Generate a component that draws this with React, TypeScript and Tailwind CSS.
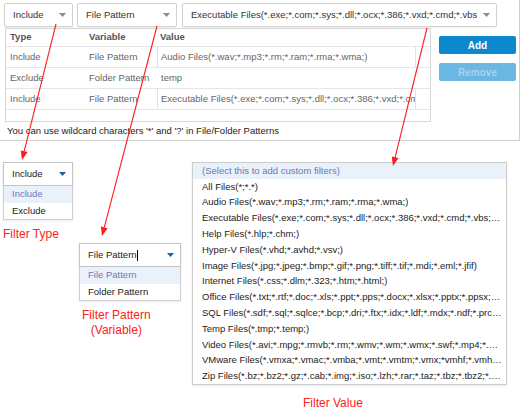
import type { ReactNode } from 'react';

const FONT = { fontFamily: '"Liberation Sans", Arial, sans-serif' };

const valueOptions = [
  'All Files(*;*.*)',
  'Audio Files(*.wav;*.mp3;*.rm;*.ram;*.rma;*.wma;)',
  'Executable Files(*.exe;*.com;*.sys;*.dll;*.ocx;*.386;*.vxd;*.cmd;*.vbs;*.bat;*.scr;)',
  'Help Files(*.hlp;*.chm;)',
  'Hyper-V Files(*.vhd;*.avhd;*.vsv;)',
  'Image Files(*.jpg;*.jpeg;*.bmp;*.gif;*.png;*.tiff;*.tif;*.mdi;*.eml;*.jfif)',
  'Internet Files(*.css;*.dlm;*.323;*.htm;*.html;)',
  'Office Files(*.txt;*.rtf;*.doc;*.xls;*.ppt;*.pps;*.docx;*.xlsx;*.pptx;*.ppsx;*.pdf;)',
  'SQL Files(*.sdf;*.sql;*.sqlce;*.bcp;*.dri;*.ftx;*.idx;*.ldf;*.mdx;*.ndf;*.prc;*.trg;)',
  'Temp Files(*.tmp;*.temp;)',
  'Video Files(*.avi;*.mpg;*.rmvb;*.rm;*.wmv;*.wm;*.wmx;*.swf;*.mp4;*.asf;)',
  'VMware Files(*.vmxa;*.vmac;*.vmba;*.vmt;*.vmtm;*.vmx;*vmhf;*.vmhr;*.vmdk;)',
  'Zip Files(*.bz;*.bz2;*.gz;*.cab;*.img;*.iso;*.lzh;*.rar;*.taz;*.tbz;*.tbz2;*.tgz;)',
];

const rows = [
  { type: 'Include', variable: 'File Pattern', value: 'Audio Files(*.wav;*.mp3;*.rm;*.ram;*.rma;*.wma;)', boxed: true },
  { type: 'Exclude', variable: 'Folder Pattern', value: 'temp', boxed: false },
  {
    type: 'Include',
    variable: 'File Pattern',
    value: 'Executable Files(*.exe;*.com;*.sys;*.dll;*.ocx;*.386;*.vxd;*.cmd;*.vbs;',
    boxed: true,
  },
];

function Caret({ blue }: { blue?: boolean }) {
  return (
    <svg width="7" height="4" viewBox="0 0 7 4" className="shrink-0">
      <polygon points="0,0 7,0 3.5,4" fill={blue ? '#1d5fa6' : '#8a8a8a'} />
    </svg>
  );
}

// top toolbar select
function Select({ width, children }: { width: string; children: ReactNode }) {
  return (
    <div
      className={`${width} h-[24px] flex items-center gap-[6px] pl-[8px] pr-[6px] border border-[#d2d2d2] rounded-[2px] bg-white shadow-[0_1px_1px_rgba(0,0,0,0.06)]`}
    >
      <div className="flex-1 overflow-hidden whitespace-nowrap text-[9.5px] text-[#333]">{children}</div>
      <Caret />
    </div>
  );
}

// opened dropdown in the lower callouts
function OpenSelect({ width, label, items, cursor }: { width: string; label: string; items: string[]; cursor?: boolean }) {
  return (
    <div className={width}>
      <div className="h-[24px] flex items-center pl-[8px] pr-[6px] border border-[#c6c6c6] bg-white shadow-[0_1px_2px_rgba(0,0,0,0.12)]">
        <div className="flex-1 flex items-center text-[9.5px] text-[#222]">
          {label}
          {cursor && <span className="w-px h-[11px] bg-black" />}
        </div>
        <Caret blue />
      </div>
      <div className="border border-t-0 border-[#cfcfcf] bg-white shadow-[0_1px_2px_rgba(0,0,0,0.08)]">
        {items.map((it, i) => (
          <div
            key={it}
            className={`h-[16.5px] flex items-center pl-[8px] text-[9.5px] ${
              i === 0 ? 'bg-[#e9f1fb] text-[#7278b8]' : 'text-[#222]'
            }`}
          >
            {it}
          </div>
        ))}
      </div>
    </div>
  );
}

function Arrow({ x1, y1, x2, y2 }: { x1: number; y1: number; x2: number; y2: number }) {
  const dx = x2 - x1;
  const dy = y2 - y1;
  const len = Math.hypot(dx, dy);
  const ux = dx / len;
  const uy = dy / len;
  const bx = x2 - ux * 9;
  const by = y2 - uy * 9;
  const px = -uy * 3.5;
  const py = ux * 3.5;
  return (
    <g>
      <line x1={x1} y1={y1} x2={bx} y2={by} stroke="#ff1a1a" strokeWidth="1.1" />
      <polygon points={`${x2},${y2} ${bx + px},${by + py} ${bx - px},${by - py}`} fill="#ff1a1a" />
    </g>
  );
}

export default function App() {
  return (
    <div className="relative w-[523px] h-[409px] bg-white overflow-hidden" style={FONT}>
      {/* ── filter editor panel ── */}
      <div className="w-[520px] h-[141px] border-r border-b border-[#cfcfcf]">
        <div className="flex pt-[3px] pl-[4px]">
          <Select width="w-[69px]">Include</Select>
          <div className="ml-[4px]">
            <Select width="w-[100px]">File Pattern</Select>
          </div>
          <div className="ml-[5px]">
            <Select width="w-[315px]">
              Executable Files(*.exe;*.com;*.sys;*.dll;*.ocx;*.386;*.vxd;*.cmd;*.vbs;*.bat;*.scr;)
            </Select>
          </div>
        </div>

        <div className="flex items-start pl-[5px] pt-[1px]">
          <div className="w-[426px] h-[94px] border border-[#d6d6d6]">
            <div className="grid grid-cols-[78px_73px_259px_1fr] h-[18px] items-center border-b border-[#e6e6e6] text-[9.5px] font-bold text-[#555]">
              <div className="pl-[4px]">Type</div>
              <div className="pl-[5px]">Variable</div>
              <div className="pl-[3px]">Value</div>
              <div />
            </div>
            {rows.map((r, i) => (
              <div
                key={i}
                className="grid grid-cols-[78px_73px_259px_1fr] h-[21px] border-b border-[#e6e6e6] text-[9.5px] text-[#666]"
              >
                <div className="pl-[4px] flex items-center">{r.type}</div>
                <div className="pl-[5px] flex items-center">{r.variable}</div>
                <div
                  className={`pl-[3px] flex items-center overflow-hidden whitespace-nowrap border-x ${
                    r.boxed ? 'border-[#e2e2e2]' : 'border-transparent'
                  }`}
                >
                  {r.value}
                </div>
                <div />
              </div>
            ))}
          </div>

          <div className="ml-[8px] mt-[8px] w-[77px] flex flex-col gap-[9px]">
            <button className="h-[18px] rounded-[2px] bg-[#0c88cf] text-white text-[10px] font-bold">Add</button>
            <button className="h-[18px] rounded-[2px] bg-[#6ab7e2] text-[#a6d3ef] text-[10px] font-bold">Remove</button>
          </div>
        </div>

        <p className="pl-[7px] pt-[2px] text-[9.5px] leading-[14px] text-[#222]">
          You can use wildcard characters '*' and '?' in File/Folder Patterns
        </p>
      </div>

      {/* ── callouts ── */}
      <div className="flex items-start pl-[3px] pt-[21px]">
        <div className="w-[70px]">
          <OpenSelect width="w-[70px]" label="Include" items={['Include', 'Exclude']} />
          <div className="mt-[7px] text-[12px] leading-[15px] text-[#ff2020] whitespace-nowrap">Filter Type</div>
        </div>

        <div className="ml-[6px] mt-[81px] w-[102px]">
          <OpenSelect width="w-[102px]" label="File Pattern" items={['File Pattern', 'Folder Pattern']} cursor />
          <div className="mt-[7px] ml-[3px] w-fit text-center text-[12px] leading-[15px] text-[#ff2020]">
            Filter Pattern
            <br />
            (Variable)
          </div>
        </div>

        <div className="ml-[11px]">
          <div className="w-[315px] border border-[#cdcdcd] bg-white shadow-[0_1px_2px_rgba(0,0,0,0.1)]">
            <div className="h-[15.8px] flex items-center pl-[9px] bg-[#e9f1fb] text-[9.5px] text-[#6f76b6]">
              (Select this to add custom filters)
            </div>
            {valueOptions.map((v) => (
              <div key={v} className="h-[15.8px] flex items-center pl-[9px] pr-[3px] text-[9.5px] text-[#222]">
                <span className="truncate">{v}</span>
              </div>
            ))}
          </div>
          <div className="mt-[11px] ml-[111px] text-[12px] leading-[15px] text-[#ff2020]">Filter Value</div>
        </div>
      </div>

      {/* red annotation arrows */}
      <svg className="absolute inset-0 pointer-events-none" width="523" height="409">
        <Arrow x1={56} y1={24} x2={22} y2={160} />
        <Arrow x1={157} y1={26} x2={102} y2={236} />
        <Arrow x1={427} y1={28} x2={393} y2={166} />
      </svg>
    </div>
  );
}
